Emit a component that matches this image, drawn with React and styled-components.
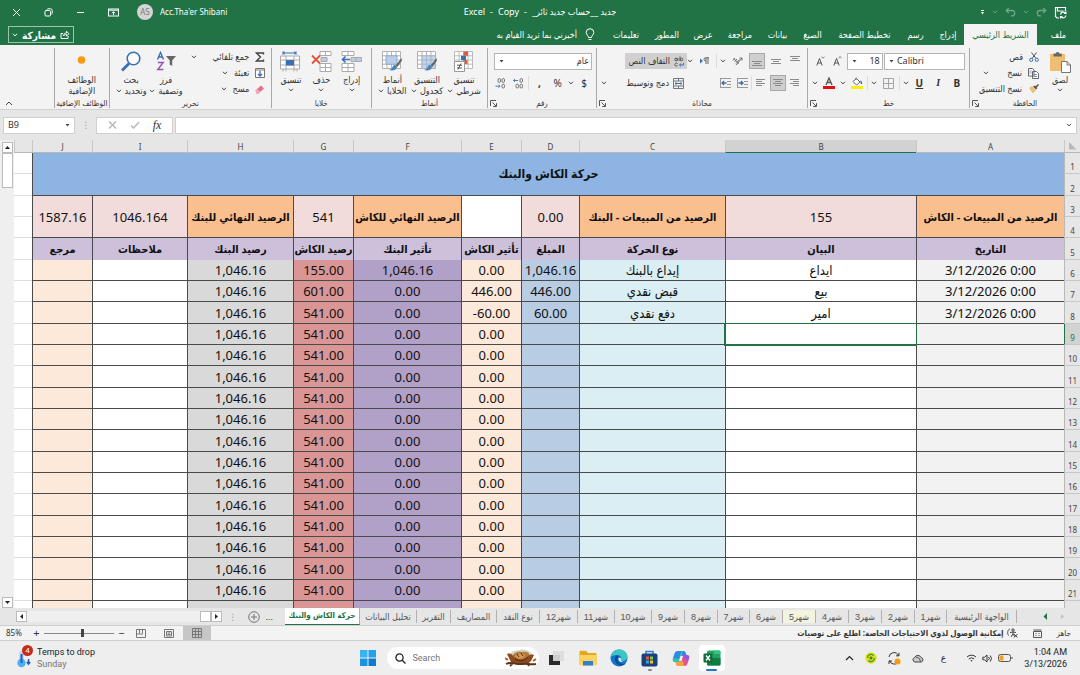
import React from 'react'
import styled, { createGlobalStyle, css } from 'styled-components'

const tabs = [
    { name: 'إدراج', width: 32 },
    { name: 'رسم', width: 33 },
    { name: 'تخطيط الصفحة', width: 69 },
    { name: 'الصيغ', width: 35 },
    { name: 'بيانات', width: 35 },
    { name: 'مراجعة', width: 40 },
    { name: 'عرض', width: 34 },
    { name: 'المطور', width: 38 },
    { name: 'تعليمات', width: 44 },
]

const columns = [
    { id: 'A', width: 148, fill: '#f2f2f2', head: 'التاريخ' },
    { id: 'B', width: 191, fill: '#ffffff', head: 'البيان' },
    { id: 'C', width: 146, fill: '#daeef3', head: 'نوع الحركة' },
    { id: 'D', width: 58, fill: '#b8cce4', head: 'المبلغ' },
    { id: 'E', width: 60, fill: '#fde9d9', head: 'تأثير الكاش' },
    { id: 'F', width: 108, fill: '#b1a0c7', head: 'تأثير البنك' },
    { id: 'G', width: 60, fill: '#da9694', head: 'رصيد الكاش' },
    { id: 'H', width: 106, fill: '#d9d9d9', head: 'رصيد البنك' },
    { id: 'I', width: 95, fill: '#ffffff', head: 'ملاحظات' },
    { id: 'J', width: 60, fill: '#fde9d9', head: 'مرجع' },
]

const summary = [
    { text: 'الرصيد من المبيعات - الكاش', fill: '#fabf8f', bold: true },
    { text: '155', fill: '#f2dcdb' },
    { text: 'الرصيد من المبيعات - البنك', fill: '#fabf8f', bold: true },
    { text: '0.00', fill: '#f2dcdb' },
    { text: '', fill: '#ffffff' },
    { text: 'الرصيد النهائي للكاش', fill: '#fabf8f', bold: true },
    { text: '541', fill: '#f2dcdb' },
    { text: 'الرصيد النهائي للبنك', fill: '#fabf8f', bold: true },
    { text: '1046.164', fill: '#f2dcdb' },
    { text: '1587.16', fill: '#f2dcdb' },
]

const entries = [
    ['3/12/2026 0:00', 'ايداع', 'إيداع بالبنك', '1,046.16', '0.00', '1,046.16', '155.00', '1,046.16', '', ''],
    ['3/12/2026 0:00', 'بيع', 'قبض نقدي', '446.00', '446.00', '0.00', '601.00', '1,046.16', '', ''],
    ['3/12/2026 0:00', 'امير', 'دفع نقدي', '60.00', '-60.00', '0.00', '541.00', '1,046.16', '', ''],
]

const emptyEntry = ['', '', '', '', '0.00', '0.00', '541.00', '1,046.16', '', '']
const rows = [...entries, ...Array(13).fill(emptyEntry)]

const sheets = [
    { name: 'الواجهة الرئيسية', width: 70 },
    { name: 'شهر1', width: 32 },
    { name: 'شهر2', width: 33 },
    { name: 'شهر3', width: 33 },
    { name: 'شهر4', width: 33 },
    { name: 'شهر5', width: 33, marked: true },
    { name: 'شهر6', width: 33 },
    { name: 'شهر7', width: 32 },
    { name: 'شهر8', width: 33 },
    { name: 'شهر9', width: 33 },
    { name: 'شهر10', width: 37 },
    { name: 'شهر11', width: 37 },
    { name: 'شهر12', width: 38 },
    { name: 'نوع النقد', width: 43 },
    { name: 'المصاريف', width: 46 },
    { name: 'التقرير', width: 34 },
    { name: 'تحليل البيانات', width: 57 },
    { name: 'حركة الكاش والبنك', width: 75, active: true },
]

/* ---------- icons ---------- */

function Icon({ w = 12, h = w, color = 'currentColor', line = 1, children }) {
    return (
        <svg width={w} height={h} viewBox={`0 0 ${w} ${h}`} fill="none" stroke={color} strokeWidth={line} aria-hidden="true">
            {children}
        </svg>
    )
}

const Chevron = ({ color = '#444' }) => <Icon w={6} h={4} color={color}><path d="M1 .8 3 2.9 5 .8" /></Icon>
const Triangle = () => <Icon w={5} h={3} color="none"><path d="M.5 0h4L2.5 2.6z" fill="#444" /></Icon>
const Launcher = () => <Icon w={7} h={7} color="#555"><path d="M.5 6V.5H6M2.5 2.5 6 6M6.5 3.2v3.3H3.2" /></Icon>

const CloseIcon = () => <Icon w={9}><path d="m1 1 7 7M8 1 1 8" /></Icon>
const RestoreIcon = () => <Icon w={9}><rect x="1" y="2.5" width="5.5" height="5.5" rx="1" /><path d="M3 1.5C3.2 1 3.5.8 4 .8h2.5c1 0 1.7.7 1.7 1.7V5c0 .6-.2.9-.7 1.1" /></Icon>
const MinimizeIcon = () => <Icon w={9}><path d="M1 4.5h7" /></Icon>
const RibbonOptionsIcon = () => <Icon w={11} h={9}><rect x=".5" y="1" width="10" height="7" /><path d="M.5 2.2h10M5.5 7V3.8M4 5.2l1.5-1.5L7 5.2" /></Icon>
const SaveIcon = () => <Icon w={13} line={1.2}><path d="M11.5 5V1.5h-10v9L3 12h2M3.5 1.5V5h6" /><path d="M6.5 8.5a2.8 2.8 0 0 1 5-1.3M12 5.5v2h-2M12 9.5a2.8 2.8 0 0 1-5 1.2M6.5 12.5v-2h2" /></Icon>
const UndoIcon = () => <Icon w={11} h={10} line={1.3}><path d="M3.8 1 1.2 3.5 3.8 6M1.5 3.5H7a2.7 2.7 0 0 1 0 5.4H6" /></Icon>
const RedoIcon = () => <Icon w={11} h={10} line={1.3}><path d="m7.2 1 2.6 2.5L7.2 6M9.5 3.5H4a2.7 2.7 0 0 0 0 5.4h1" /></Icon>
const BulbIcon = () => <Icon w={10} h={13}><path d="M3.5 9.5C3.5 7.5 1.2 7 1.2 4.5a3.8 3.8 0 0 1 7.6 0C8.8 7 6.5 7.5 6.5 9.5zM3.5 11.5h3" /></Icon>
const ShareIcon = () => <Icon w={10} h={9}><path d="M3 3.5H1v5h7V6M3.5 6C3.7 4 4.5 3 6.5 3V1.2L9 3.8 6.5 6V4.5C5 4.5 4.2 5 3.5 6z" /></Icon>

const PasteIcon = () => (
    <Icon w={22} h={22} color="none">
        <rect x="1" y="3" width="15" height="17" fill="#eebf72" />
        <path d="M4.5 5.5v-3h2.300a1.800 1.800 0 0 1 3.500 0h2.400v3z" fill="#666" />
        <path d="M12.5 10.5H18l3.5 3.5v7.5h-9z" fill="#fff" stroke="#777" />
        <path d="M18 10.5V14h3.5" stroke="#777" />
    </Icon>
)
const CutIcon = () => (
    <Icon w={10} h={10} color="#555">
        <path d="m2.5.5 4.5 6M7.5.5l-4.5 6" />
        <circle cx="2.2" cy="7.8" r="1.6" stroke="#3b6fb5" /><circle cx="7.8" cy="7.8" r="1.6" stroke="#3b6fb5" />
    </Icon>
)
const CopyIcon = () => <Icon w={11} h={11} color="#666"><path d="M.5.5h4L6 2v6H.5zM4.5 3.5h4l2 2v5h-6z" fill="#fff" /><path d="M1.5 3h2M1.5 5h2M6 6.5h3M6 8.5h3" stroke="#6a93c8" /></Icon>
const PainterIcon = () => <Icon w={11} h={10} color="none"><path d="m1 4 3-2 4 4-3 3.5z" fill="#eebf72" /><path d="m5 2.5 2-1L9.5 4 8 5.5z" fill="#555" /><path d="m8 3 2.5-2.5" stroke="#555" strokeWidth="1.5" /></Icon>

const BordersIcon = () => <Icon w={11} color="#a5a5a5"><path d="M.5.5h10v10H.5zM5.5.5v10M.5 5.5h10" /></Icon>
const FillIcon = () => <Icon w={12} h={12} color="#666"><path d="m2 4.5 3.5-3L9 5 5.500 8zM5 3V.8" fill="#fff" /><path d="M9.5 4c1 1 1.3 2 .8 3" stroke="#3b6fb5" strokeWidth="1.5" /><path d="M0 10.5h12" stroke="#f8f000" strokeWidth="3" /></Icon>
const FontColorIcon = () => <Icon w={12} h={12} color="#555"><path d="m3 8 3-7 3 7M4 5.5h4" strokeWidth="1.3" /><path d="M0 10.5h12" stroke="#e01010" strokeWidth="3" /></Icon>
const FontSizeIcon = ({ up }) => <Icon w={9} h={10} color="#555"><path d="m.8 9.5 2.7-7 2.7 7M1.8 7h3.5" /><path d={up ? 'M5.5 2 7 .6 8.5 2' : 'M5.5.8 7 2.2 8.5.8'} strokeWidth=".8" /></Icon>

const lineSets = {
    top: 'M0 .5h10M2 2.5h6M0 4.5h10',
    middle: 'M0 3.5h10M2 5.5h6M0 7.5h10',
    bottom: 'M0 5.5h10M2 7.5h6M0 9.5h10',
    right: 'M0 1.5h9M3 3.5h6M0 5.5h9M3 7.5h6',
    center: 'M0 1.5h10M2 3.5h6M0 5.5h10M2 7.5h6',
    left: 'M0 1.5h9M0 3.5h6M0 5.5h9M0 7.5h6',
}
const LinesIcon = ({ kind }) => <Icon w={10} h={10} color="#8a8a8a"><path d={lineSets[kind]} /></Icon>
const OrientationIcon = () => <Icon w={11} h={10} color="#666"><path d="M1 4.5 3 2M2.5 6 5 3M4 7.5l3.5-4M1.5 2.5l5.5 5M4 9.2 10 2M7.5 2H10v2.5" strokeWidth=".9" /></Icon>
const DirectionIcon = () => <Icon w={10} h={8} color="#666"><path d="M7 7V.8M9 7V.8M10 .8H6.5a1.4 1.4 0 0 0 0 3H7" /><path d="M1 1.5v5L4 4z" fill="#3b6fb5" stroke="none" /></Icon>
const IndentIcon = ({ flip }) => (
    <Icon w={11} h={10} color="#999">
        <path d="M0 .5h11M7 3.5h4M7 6.5h4M0 9.5h11M.5.5v9" />
        <path d={flip ? 'M6.5 5H2M4 3 2 5l2 2' : 'M1.5 5H6M4 3l2 2-2 2'} stroke="#3b6fb5" strokeWidth="1.3" />
    </Icon>
)
const WrapIcon = () => (
    <Icon w={10} h={11} color="#555">
        <circle cx="2" cy="3.5" r="1.3" /><path d="M3.8 2v3M6 .5V5" /><circle cx="7.5" cy="3.5" r="1.3" />
        <path d="M3.5 7.5C2.5 6.8.8 7.3.8 8.6s1.7 1.8 2.7 1.1" /><path d="M9.5 7v2h-4M7 7.6 5.5 9 7 10.4" stroke="#3b6fb5" />
    </Icon>
)
const MergeIcon = () => <Icon w={11} h={11} color="#777"><path d="M.5.5h10v10H.5zM.5 3h10M.5 8h10M5.5.5V3M5.5 8v2.5" /><path d="M2 5.5h7M3.5 4.2 2 5.5l1.5 1.3M7.5 4.2 9 5.5 7.5 6.8" stroke="#3b6fb5" /></Icon>
const DecimalIcon = ({ more }) => (
    <Icon w={11} h={11} color="#666" line={0.9}>
        <rect x="7" y=".6" width="2.5" height="3.8" rx="1.2" />
        {!more && <rect x="3" y=".6" width="2.5" height="3.8" rx="1.2" />}
        <rect x="7" y="6.2" width="2.5" height="3.8" rx="1.2" />
        {more && <rect x="3" y="6.2" width="2.5" height="3.8" rx="1.2" />}
        <path d={more ? 'M5 2.5H.5M2 1 .5 2.5 2 4' : 'M.5 8.2H5M3.5 6.7 5 8.2 3.5 9.7'} stroke="#3b6fb5" />
    </Icon>
)

const gridPath = 'M1.5.5h18v17h-18zM1.5 4.8h18M1.5 9h18M1.5 13.2h18M6 .5v17M10.5.5v17M15 .5v17'
const Brush = () => (
    <>
        <path d="m20.5 7-6 7.5 1.800 1.500L21 9.500z" fill="#666" stroke="none" />
        <path d="M14 14c-2 0-2.200 1.500-3 3-.5 1-1.500 1.500-3 2 3 1 7.500.5 8-3z" fill="#4a80bd" stroke="none" />
    </>
)
const ConditionalIcon = () => (
    <Icon w={22} h={21} color="#bbb">
        <path d={gridPath} fill="#fff" />
        <path d="M10.5.5H15v4.300h-4.500zM10.500 9h4v4h-4z" fill="#dd5b45" stroke="none" /><path d="M8 4.800h5V9H8z" fill="#3b6fb5" stroke="none" />
        <path d="M1.5 10.5h10v10h-10z" fill="#fff" stroke="#999" /><path d="M4 14.2h5M4 17h5M8 12.5l-3 6" stroke="#555" />
    </Icon>
)
const TableStyleIcon = () => <Icon w={22} h={21} color="#b0b0b0"><path d={gridPath} fill="#fff" /><path d="M6 4.800h13.500v12.700H6z" fill="#b4cee9" opacity=".8" /><path d="M10.5 5v12M15 5v12M6 9h13M6 13.2h13" stroke="#a5b9cf" /><Brush /></Icon>
const CellStyleIcon = () => <Icon w={22} h={21} color="#b0b0b0"><path d={gridPath} fill="#fff" /><path d="M5 4.800h11v8.400H5z" fill="#b9cde8" stroke="#8fabd0" /><Brush /></Icon>
const InsertCellsIcon = () => <Icon w={21} h={21} color="#aaa"><path d="M1 .5h12v4H1zM7 .5v4M1 12.5h12v8H1zM7 12.5v8M1 16.5h12" fill="#fff" /><path d="M10 6.5h10.5v4H10zM15 6.5v4" fill="#b9cde8" /><path d="M9 8.5H1.5M4.5 5.5l-3 3 3 3" stroke="#3b6fb5" strokeWidth="1.6" /></Icon>
const DeleteCellsIcon = () => <Icon w={21} h={21} color="#aaa"><path d="M9 .5h11v4H9zM14.5.5v4M9 12.5h11v8H9zM14.5 12.5v8M9 16.5h11" fill="#fff" /><path d="M10 6.5h6v4h-6z" fill="#b9cde8" /><path d="m1 4.5 8 8M9 4.5l-8 8" stroke="#e0533a" strokeWidth="1.8" /></Icon>
const FormatCellsIcon = () => <Icon w={21} h={21} color="#aaa"><path d="M.5 5h19v13H.5zM.5 9h19M.5 14h19M6 5v15.5M14 5v15.5M3 18v2.5M17 18v2.5" fill="#fff" /><path d="M6 9h8v5.5H6z" fill="#3b6fb5" stroke="none" /><path d="M3 2h13M3 .2v3.6M16 .2v3.6M5 .8 3.5 2 5 3.2M14 .8 15.5 2 14 3.2" stroke="#3b6fb5" /></Icon>
const SumIcon = () => <Icon w={10} h={10} color="#444" line={1.4}><path d="M8.5 2.5V1h-7l4 4-4 4h7V7.5" /></Icon>
const FillDownIcon = () => <Icon w={10} h={10} color="#777"><path d="M.5.5h9v9h-9zM.5 2h9" fill="#fff" /><path d="M5 3v5M3 6l2 2 2-2" stroke="#3b6fb5" strokeWidth="1.3" /></Icon>
const EraserIcon = () => <Icon w={10} h={9} color="none"><path d="M.5 5.5 6 .5l3 3-5.5 5h-2z" fill="#e8708c" /><path d="m.5 5.5 1.8-1.6 3 3-1.8 1.6h-2z" fill="#f3a7b8" /></Icon>
const SortIcon = () => <Icon w={20} h={20} color="#3b6fb5" line={1.4}><path d="m1.5 8.5 3-7 3 7M2.5 6h4" /><path d="M1.8 11.5h5.4l-5.4 7h5.6" stroke="#9b4fb5" /><path d="M10 5h10l-3.8 4.5V15l-2.5-1.5v-4z" fill="#666" stroke="none" /></Icon>
const FindIcon = () => <Icon w={22} h={21} color="#3b6fb5"><circle cx="13.5" cy="7.5" r="6.3" strokeWidth="1.6" fill="#fdfdfd" /><path d="m9 12.5-7 7" strokeWidth="2.8" /></Icon>
const AddinIcon = () => <Icon w={21} h={21} color="none"><circle cx="10.5" cy="9" r="3.8" fill="#f59a12" /></Icon>

const CheckIcon = () => <Icon w={10} h={8} color="#b5b5b5" line={1.3}><path d="M1 4.5 3.5 7 9 1" /></Icon>
const CrossIcon = () => <Icon w={9} h={8} color="#b5b5b5" line={1.3}><path d="m1 .5 7 7M8 .5l-7 7" /></Icon>
const ArrowHead = ({ d, fill = '#222' }) => <Icon w={7} h={7} color="none"><path d={d} fill={fill} /></Icon>
const AddSheetIcon = () => <Icon w={12} color="#777"><circle cx="6" cy="6" r="5.3" /><path d="M6 3v6M3 6h6" /></Icon>
const CornerIcon = () => <Icon w={8} h={8} color="none"><path d="M0 0v7.5h7.5z" fill="#b8b8b8" /></Icon>

const NormalViewIcon = () => <Icon w={10} h={10} color="#777"><path d="M.5.5h9v9h-9zM3.5.5v9M6.5.5v9M.5 3.5h9M.5 6.5h9" /></Icon>
const PageViewIcon = () => <Icon w={10} h={9} color="#777"><path d="M.5.5h9v8h-9zM2.5 2.5h5V7h-5zM3.5 4h3M3.5 5.5h3" /></Icon>
const BreakViewIcon = () => <Icon w={10} h={9} color="#777"><path d="M.5.5h9v8h-9zM3.5.5v4M6.5.5v4M.5 5H7" /></Icon>
const MacroIcon = () => <Icon w={9} h={9} color="#555"><path d="M.5 2.5h8v6h-8zM.5 1h8M2.5 4.5h1M5.5 4.5h1M2.5 6.5h1M5.5 6.5h1" /></Icon>
const AccessIcon = () => <Icon w={11} h={10} color="#444"><circle cx="6" cy="2" r="1.2" /><path d="M3 4.5 6 4l3 .5M6 4v2l2 3M6 6 4 9M1.5 7.5C0 5 .5 2 3 .8M7 6l3.5 3.5M10.5 6 7 9.5" /></Icon>

const WeatherIcon = () => (
    <Icon w={19} h={19} color="none">
        <rect x="4" y="2" width="5" height="12" rx="2.5" fill="#bcdcf6" /><circle cx="6.5" cy="14" r="4.2" fill="#4cb1f2" />
        <path d="M6.5 5v9" stroke="#1f5fc0" strokeWidth="2" />
        <path d="M13.5 10v5M11.8 13l1.7 2 1.7-2" stroke="#2457b8" strokeWidth="1.5" />
    </Icon>
)
const WindowsIcon = () => <Icon w={16} color="none"><path d="M0 0h7.5v7.5H0z" fill="#38b5f1" /><path d="M8.5 0H16v7.5H8.500z" fill="#22a2ea" /><path d="M0 8.500h7.500V16H0z" fill="#1b93e2" /><path d="M8.500 8.500H16V16H8.500z" fill="#0c7dd6" /></Icon>
const SearchIcon = () => <Icon w={11} color="#222" line={1.3}><circle cx="4.5" cy="4.5" r="3.6" /><path d="m7.2 7.2 3.3 3.3" /></Icon>
const ArtIcon = () => (
    <Icon w={32} h={18} color="none">
        <path d="M4 8C5 3 9 1 13 1.5 19-1 27 2 28 8l-4 4H8z" fill="#ccd3c4" />
        <path d="M7 8c1-4 6-6 10-5 5-1 8 1 8 5l-4 5H10z" fill="#b5793f" />
        <path d="M2 5c3-1 5 0 6 2 3 4 10 5 14 1 2-2 4-3 7-2l-3 6c-4 5-16 5-20 1z" fill="#8c4a20" />
        <path d="M10 7c3-3 7-4 10-1-2 4-6 5-10 1z" fill="#d9994f" />
        <path d="M1 15c6-3 9 1 15 0s9 1 15 0M5 17l3-3M24 17l-2-3" stroke="#5d3218" strokeWidth="1.8" />
        <path d="M10 10c5 3 9 2 13-2M12 5l2 3M16 4l2 3" stroke="#4c260f" />
        <path d="M3 11 0 9M28 12l3-2" stroke="#a3662f" strokeWidth="2" />
    </Icon>
)
const TaskViewIcon = () => <Icon w={17} h={16} color="none"><path d="M1 5h11v10H1z" fill="#2b2b2b" /><path d="M5 1h11v10H5z" fill="#dcdcdc" opacity=".92" /></Icon>
const FolderIcon = () => <Icon w={18} h={16} color="none"><path d="M.5 2c0-.8.5-1.3 1.3-1.3h5L9 3h7.500c.6 0 1 .5 1 1v10.500H.5z" fill="#e5a823" /><path d="M.5 5h17v9.500c0 .6-.4 1-1 1h-15c-.6 0-1-.4-1-1z" fill="#ffd45e" /><path d="M4 11h10v4.500H4z" fill="#2d7fcf" /></Icon>
const EdgeIcon = () => (
    <Icon w={18} h={18} color="none">
        <circle cx="9" cy="9" r="8.5" fill="#1474c9" />
        <path d="M.6 8C1.5 3.5 5 .5 9.2.5c4.8 0 8.300 3.500 8.300 7 0 2.700-2.100 4.500-4.700 4.500-2 0-2.800-.8-2-1.700.8-1.200.4-3.800-2.600-4.300C5 5.500 1.800 6.700.6 8z" fill="#3cc5c4" />
        <path d="M6.5 6.5C4 8.5 4.500 13 7.500 15.500c2.500 2 6.500 1 8.500-1.300-3 1.500-6.500.8-8-2-.8-1.700-.5-3.700.8-5z" fill="#0b4d94" />
        <path d="M8.500 9c-.5 3 2 4.500 5 3.700-2-.1-3.200-.9-2.600-2.400.5-1-.8-2.300-2.400-1.300z" fill="#eef8fd" />
    </Icon>
)
const StoreIcon = () => <Icon w={17} h={17} color="none"><path d="M5 4V1.500h7V4" stroke="#2c7fd0" strokeWidth="1.5" /><rect x=".5" y="3.5" width="16" height="13" rx="2" fill="#17427c" /><path d="M5 6.500h3v3H5z" fill="#f0553a" /><path d="M9 6.500h3v3H9z" fill="#8cc63f" /><path d="M5 10.500h3v3H5z" fill="#35a5ea" /><path d="M9 10.500h3v3H9z" fill="#fbc12d" /></Icon>
const CopilotIcon = () => (
    <Icon w={18} h={17} color="none">
        <path d="M6 1h5.500c1.500 0 2 1 2.400 2.300L15 7h-4L8 12H3.500C1 12 .3 10.500 1 8l1.500-4.500C3 1.800 4 1 6 1z" fill="#2b8be8" />
        <path d="M1 8c-.7 2.500 0 4 2.500 4H8l1.500-5L11 1c-3 1-3 5-4 8z" fill="#35c3a0" />
        <path d="M12 16H6.500c-1.500 0-2-1-2.400-2.300L3.500 12H8l2.500-7h4c2.500 0 3.200 1.500 2.500 4l-1.500 4.500C15 15.200 14 16 12 16z" fill="#e6518f" />
        <path d="M12 16H6.500c-1.500 0-2-1-2.400-2.300L3.500 12H8l3-1z" fill="#f8a53a" />
        <path d="M10.500 5h4c2.500 0 3.200 1.500 2.500 4l-3 1z" fill="#8b5be8" />
        <path d="m8.500 6-1.500 5h2.500L11 6z" fill="#f4f2fb" />
    </Icon>
)
const ExcelIcon = () => <Icon w={18} h={16} color="none"><rect x="4" y=".5" width="13.5" height="15" rx="1.5" fill="#21a366" /><path d="M4 8h13.500v6c0 1-.5 1.500-1.500 1.500H5.500C4.500 15.500 4 15 4 14z" fill="#107c41" /><path d="M11 .5h5c1 0 1.500.5 1.500 1.500v2H11z" fill="#33c481" /><rect x=".5" y="3.5" width="9" height="9" rx="1" fill="#0f6b38" /><path d="m3 5.500 4 5M7 5.500l-4 5" stroke="#fff" strokeWidth="1.4" /></Icon>

const TrayUpIcon = () => <Icon w={9} h={6} color="#222" line={1.2}><path d="M1 5 4.5 1.5 8 5" /></Icon>
const TrayPlusIcon = () => <Icon w={12} color="none"><circle cx="6" cy="6" r="5.7" fill="#e9dc16" /><path d="M2.5 6a3.5 3.5 0 0 1 6-2.500M9.500 6a3.500 3.500 0 0 1-6 2.500" stroke="#2f9e3c" strokeWidth="1.3" /><path d="M6 4.500v3M4.500 6h3" stroke="#1f7c30" strokeWidth="1.3" /></Icon>
const SyncIcon = () => <Icon w={13} h={13} color="#333"><path d="M1 5a5 5 0 0 1 9.5-1.500M11 .8v3H8M10 10.500A5 5 0 0 1 1.500 8.500M1 12V9h3" /><circle cx="9.5" cy="9.5" r="3" fill="#f59a12" stroke="none" /></Icon>
const CloudIcon = () => <Icon w={12} h={9} color="#444"><path d="M3 8a2.300 2.300 0 0 1-.3-4.500A3.400 3.400 0 0 1 9 3.500 2.300 2.300 0 0 1 9.200 8z" fill="#ccc" /><path d="M4 3.500c2-.5 3.500.5 4.500 4" /></Icon>
const WifiIcon = () => <Icon w={11} h={8} color="#333"><path d="M1 3a6.500 6.500 0 0 1 9 0M2.800 5a4 4 0 0 1 5.400 0" /><circle cx="5.5" cy="6.7" r=".8" fill="#333" stroke="none" /></Icon>
const VolumeIcon = () => <Icon w={11} h={9} color="#333"><path d="M.8 3.200v2.600h1.800L5 8V1L2.600 3.200zM6.500 3a2 2 0 0 1 0 3M8.200 1.500a4.500 4.500 0 0 1 0 6" /></Icon>
const BatteryIcon = () => <Icon w={15} h={8} color="#555"><rect x=".5" y=".5" width="12" height="7" rx="2" /><path d="M14 3v2" /><rect x="1.5" y="1.5" width="4" height="5" rx="1" fill="#f0a020" stroke="none" /></Icon>

/* ---------- ribbon pieces ---------- */

function BigButton({ icon, lines, caret }) {
    return (
        <Big type="button">
            <BigArt>{icon}</BigArt>
            <span>{lines[0]}</span>
            {lines[1] && <span>{lines[1]} {caret && <Chevron />}</span>}
            {!lines[1] && caret && <Below><Chevron /></Below>}
        </Big>
    )
}

function Group({ size, name, launcher, children }) {
    return (
        <GroupBox $size={size}>
            <GroupBody>{children}</GroupBody>
            <GroupName>
                <span>{name}</span>
                {launcher && <LauncherButton type="button" aria-label={`خيارات ${name}`}><Launcher /></LauncherButton>}
            </GroupName>
        </GroupBox>
    )
}

function Picker({ label, value, size, align = 'right', options }) {
    return (
        <PickerBox $size={size}>
            <PickerSelect $align={align} aria-label={label} defaultValue={value}>
                {options.map(o => <option key={o}>{o}</option>)}
            </PickerSelect>
            <Triangle />
        </PickerBox>
    )
}

function Ribbon() {
    return (
        <RibbonBar>
            <Group size={111} name="الحافظة" launcher>
                <BigButton icon={<PasteIcon />} lines={['لصق']} caret />
                <Stack>
                    <Small type="button"><CutIcon />قص</Small>
                    <Small type="button"><CopyIcon />نسخ <Push $gap={6} /><Chevron /></Small>
                    <Small type="button"><PainterIcon />نسخ التنسيق</Small>
                </Stack>
            </Group>
            <Group size={162} name="خط" launcher>
                <Block>
                    <ToolRow>
                        <Picker label="الخط" value="Calibri" size={81} align="left" options={['Calibri', 'Arial']} />
                        <Picker label="حجم الخط" value="18" size={36} options={['18', '20']} />
                        <Tool type="button" aria-label="تكبير الخط"><FontSizeIcon up /></Tool>
                        <Tool type="button" aria-label="تصغير الخط"><FontSizeIcon /></Tool>
                    </ToolRow>
                    <ToolRow>
                        <Tool type="button"><b>B</b></Tool>
                        <Tool type="button"><Italic>I</Italic></Tool>
                        <Tool type="button"><u><b>U</b></u></Tool>
                        <Chevron />
                        <Rule />
                        <Tool type="button" aria-label="حدود"><BordersIcon /></Tool>
                        <Chevron />
                        <Rule />
                        <Tool type="button" aria-label="لون التعبئة"><FillIcon /></Tool>
                        <Chevron />
                        <Tool type="button" aria-label="لون الخط"><FontColorIcon /></Tool>
                        <Chevron />
                    </ToolRow>
                </Block>
            </Group>
            <Group size={212} name="محاذاة" launcher>
                <Block>
                    <ToolRow>
                        <Tool type="button" aria-label="محاذاة للأعلى"><LinesIcon kind="top" /></Tool>
                        <Tool type="button" aria-label="محاذاة للوسط"><LinesIcon kind="middle" /></Tool>
                        <Tool type="button" aria-label="محاذاة للأسفل" $on><LinesIcon kind="bottom" /></Tool>
                        <Tool type="button" aria-label="الاتجاه"><OrientationIcon /></Tool>
                        <Chevron />
                        <Rule />
                        <Tool type="button" aria-label="اتجاه النص"><DirectionIcon /></Tool>
                        <Chevron />
                    </ToolRow>
                    <ToolRow $start>
                        <Tool type="button" aria-label="يمين"><LinesIcon kind="right" /></Tool>
                        <Tool type="button" aria-label="توسيط" $on><LinesIcon kind="center" /></Tool>
                        <Tool type="button" aria-label="يسار"><LinesIcon kind="left" /></Tool>
                        <Rule />
                        <Tool type="button" aria-label="إنقاص المسافة"><IndentIcon /></Tool>
                        <Tool type="button" aria-label="زيادة المسافة"><IndentIcon flip /></Tool>
                    </ToolRow>
                </Block>
                <Block $fit={86}>
                    <ToolRow $start>
                        <WideTool type="button" $on><WrapIcon />التفاف النص</WideTool>
                    </ToolRow>
                    <ToolRow>
                        <WideTool type="button"><MergeIcon />دمج وتوسيط</WideTool>
                        <Chevron />
                    </ToolRow>
                </Block>
            </Group>
            <Group size={109} name="رقم" launcher>
                <Block>
                    <ToolRow>
                        <Picker label="تنسيق الأرقام" value="عام" size={98} options={['عام', 'رقم']} />
                    </ToolRow>
                    <ToolRow>
                        <Tool type="button">$</Tool>
                        <Chevron />
                        <Tool type="button">%</Tool>
                        <Tool type="button"><b>,</b></Tool>
                        <Rule />
                        <Tool type="button" aria-label="زيادة المنازل العشرية"><DecimalIcon more /></Tool>
                        <Tool type="button" aria-label="إنقاص المنازل العشرية"><DecimalIcon /></Tool>
                    </ToolRow>
                </Block>
            </Group>
            <Group size={116} name="أنماط">
                <BigButton icon={<ConditionalIcon />} lines={['تنسيق', 'شرطي']} caret />
                <BigButton icon={<TableStyleIcon />} lines={['التنسيق', 'كجدول']} caret />
                <BigButton icon={<CellStyleIcon />} lines={['أنماط', 'الخلايا']} caret />
            </Group>
            <Group size={100} name="خلايا">
                <BigButton icon={<InsertCellsIcon />} lines={['إدراج']} caret />
                <BigButton icon={<DeleteCellsIcon />} lines={['حذف']} caret />
                <BigButton icon={<FormatCellsIcon />} lines={['تنسيق']} caret />
            </Group>
            <Group size={162} name="تحرير">
                <Stack $wide>
                    <Small type="button"><SumIcon />جمع تلقائي <Push $gap={4} /><Chevron /></Small>
                    <Small type="button"><FillDownIcon />تعبئة <Chevron /></Small>
                    <Small type="button"><EraserIcon />مسح <Chevron /></Small>
                </Stack>
                <BigButton icon={<SortIcon />} lines={['فرز', 'وتصفية']} caret />
                <BigButton icon={<FindIcon />} lines={['بحث', 'وتحديد']} caret />
            </Group>
            <Group size={55} name="الوظائف الإضافية">
                <BigButton icon={<AddinIcon />} lines={['الوظائف', 'الإضافية']} />
            </Group>
            <RibbonEnd>
                <Collapse type="button" aria-label="طي الشريط"><Icon w={8} h={5} color="#444"><path d="m1 4 3-3 3 3" /></Icon></Collapse>
            </RibbonEnd>
        </RibbonBar>
    )
}

function Sheet() {
    return (
        <SheetArea>
            <Table>
                <colgroup>
                    <col style={{ width: 16 }} />
                    {columns.map(c => <col key={c.id} style={{ width: c.width }} />)}
                    <col style={{ width: 18 }} />
                </colgroup>
                <thead>
                    <tr>
                        <ColHead><CornerIcon /></ColHead>
                        {columns.map(c => <ColHead key={c.id} scope="col" $on={c.id === 'B'}>{c.id}</ColHead>)}
                        <ColHead />
                    </tr>
                </thead>
                <tbody>
                    <Row>
                        <RowHead scope="row">1</RowHead>
                        <TitleCell colSpan={10} rowSpan={2} $fill="#8db4e2" $bold>حركة الكاش والبنك</TitleCell>
                        <Blank />
                    </Row>
                    <Row><RowHead scope="row">2</RowHead><Blank /></Row>
                    <Row>
                        <RowHead scope="row">3</RowHead>
                        {summary.map((s, i) => <Cell key={i} rowSpan={2} $fill={s.fill} $bold={s.bold}>{s.text}</Cell>)}
                        <Blank />
                    </Row>
                    <Row><RowHead scope="row">4</RowHead><Blank /></Row>
                    <Row>
                        <RowHead scope="row">5</RowHead>
                        {columns.map(c => <HeadCell key={c.id} $fill="#ccc0da" $bold>{c.head}</HeadCell>)}
                        <Blank />
                    </Row>
                    {rows.map((row, r) => (
                        <Row key={r}>
                            <RowHead scope="row" $on={r === 3}>{r + 6}</RowHead>
                            {row.map((text, i) => (
                                <Cell key={i} $fill={columns[i].fill} $active={r === 3 && i === 1}><bdi>{text}</bdi></Cell>
                            ))}
                            <Blank />
                        </Row>
                    ))}
                    <Row>
                        <RowHead />
                        {columns.map(c => <Cell key={c.id} $fill={c.fill} />)}
                        <Blank />
                    </Row>
                </tbody>
            </Table>
            <VScroll>
                <ScrollButton type="button" aria-label="للأعلى"><ArrowHead d="M1 5h5L3.5 2z" /></ScrollButton>
                <VThumb />
                <ScrollButton type="button" aria-label="للأسفل"><ArrowHead d="M1 2h5L3.5 5z" /></ScrollButton>
            </VScroll>
        </SheetArea>
    )
}

function Taskbar() {
    return (
        <TaskRow>
            <Weather>
                <WeatherArt><WeatherIcon /><Badge>4</Badge></WeatherArt>
                <div>
                    <p>Temps to drop</p>
                    <Muted>Sunday</Muted>
                </div>
            </Weather>
            <Dock>
                <Plain type="button" aria-label="Start"><WindowsIcon /></Plain>
                <SearchBox>
                    <SearchIcon />
                    <input type="text" aria-label="Search" placeholder="Search" />
                    <ArtIcon />
                </SearchBox>
                <DockItem type="button" aria-label="Task View"><TaskViewIcon /></DockItem>
                <DockItem type="button" aria-label="File Explorer"><FolderIcon /></DockItem>
                <DockItem type="button" aria-label="Edge"><EdgeIcon /></DockItem>
                <DockItem type="button" aria-label="Store" $mark="#888"><StoreIcon /></DockItem>
                <DockItem type="button" aria-label="Copilot"><CopilotIcon /></DockItem>
                <DockItem type="button" aria-label="Excel" $mark="#2277c4" $on><ExcelIcon /></DockItem>
            </Dock>
            <Tray>
                <TrayUpIcon />
                <TrayPlusIcon />
                <SyncIcon />
                <CloudIcon />
                <Lang>ع</Lang>
                <Status><WifiIcon /><VolumeIcon /><BatteryIcon /></Status>
                <Clock>
                    <p>1:04 AM</p>
                    <p>3/13/2026</p>
                </Clock>
            </Tray>
        </TaskRow>
    )
}

function App() {
    return (
        <Window dir="rtl">
            <GlobalStyle />
            <Header>
                <TitleBar>
                    <QuickAccess>
                        <Plain type="button" aria-label="حفظ"><SaveIcon /></Plain>
                        <Dim type="button" aria-label="إعادة"><RedoIcon /></Dim>
                        <Dim type="button" aria-label="خيارات الإعادة"><Chevron color="white" /></Dim>
                        <Dim type="button" aria-label="تراجع"><UndoIcon /></Dim>
                        <Dim type="button" aria-label="خيارات التراجع"><Chevron color="white" /></Dim>
                        <Plain type="button" aria-label="تخصيص"><Icon w={5} h={5} color="none"><path d="M1 0h3v1H1zM1 2h3L2.5 4.5z" fill="#fff" /></Icon></Plain>
                    </QuickAccess>
                    <DocTitle>
                        <bdi>جديد __حساب جديد ثائر_</bdi><span>-</span><bdi>Copy</bdi><span>-</span><bdi>Excel</bdi>
                    </DocTitle>
                    <WindowTools>
                        <Plain type="button" aria-label="إغلاق"><CloseIcon /></Plain>
                        <Plain type="button" aria-label="استعادة"><RestoreIcon /></Plain>
                        <Plain type="button" aria-label="تصغير"><MinimizeIcon /></Plain>
                        <Plain type="button" aria-label="خيارات عرض الشريط"><RibbonOptionsIcon /></Plain>
                        <User><Avatar>AS</Avatar>Acc.Tha'er Shibani</User>
                    </WindowTools>
                </TitleBar>
                <TabBar>
                    <Tab type="button" $width={43}>ملف</Tab>
                    <Tab type="button" $width={73} $on>الشريط الرئيسي</Tab>
                    {tabs.map(t => <Tab key={t.name} type="button" $width={t.width}>{t.name}</Tab>)}
                    <TellMe type="button"><BulbIcon />أخبرني بما تريد القيام به</TellMe>
                    <Share type="button"><ShareIcon />مشاركة<Chevron color="white" /></Share>
                </TabBar>
            </Header>
            <Ribbon />
            <FormulaBar>
                <NameBox>
                    <input type="text" aria-label="مربع الاسم" defaultValue="B9" />
                    <Triangle />
                </NameBox>
                <Dots>⋮</Dots>
                <FormulaTools>
                    <Plain type="button" aria-label="إلغاء"><CrossIcon /></Plain>
                    <Plain type="button" aria-label="إدخال"><CheckIcon /></Plain>
                    <Fx type="button">fx</Fx>
                </FormulaTools>
                <FormulaField>
                    <input type="text" aria-label="شريط الصيغة" />
                    <Chevron />
                </FormulaField>
            </FormulaBar>
            <Sheet />
            <SheetBar>
                <SheetNav>
                    <ArrowHead d="M2 1v5l3-2.5z" fill="#c4c4c4" />
                    <ArrowHead d="M5 0v7L1.5 3.5z" fill="#217346" />
                </SheetNav>
                {sheets.map(s => (
                    <SheetTab key={s.name} type="button" $width={s.width} $on={s.active} $marked={s.marked}>{s.name}</SheetTab>
                ))}
                <SheetMore>
                    <span>...</span>
                    <Plain type="button" aria-label="ورقة جديدة"><AddSheetIcon /></Plain>
                    <Dots>⋮</Dots>
                </SheetMore>
                <HScroll>
                    <ScrollButton type="button" aria-label="يمين"><ArrowHead d="M2 1v5l3-2.5z" /></ScrollButton>
                    <HThumb />
                    <ScrollButton type="button" aria-label="يسار"><ArrowHead d="M5 1v5L2 3.5z" /></ScrollButton>
                </HScroll>
            </SheetBar>
            <StatusBar>
                <StatusInfo>
                    <span>جاهز</span>
                    <MacroIcon />
                    <Access><AccessIcon /><b>إمكانية الوصول لذوي الاحتياجات الخاصة: اطلع على توصيات</b></Access>
                </StatusInfo>
                <ViewTools>
                    <ViewButton type="button" aria-label="عادي" $on><NormalViewIcon /></ViewButton>
                    <ViewButton type="button" aria-label="تخطيط الصفحة"><PageViewIcon /></ViewButton>
                    <ViewButton type="button" aria-label="فواصل الصفحات"><BreakViewIcon /></ViewButton>
                </ViewTools>
                <Zoom>
                    <Plain type="button">−</Plain>
                    <Slider type="range" aria-label="تكبير" min="0" max="100" defaultValue="44" />
                    <Plain type="button">+</Plain>
                    <Percent>85%</Percent>
                </Zoom>
            </StatusBar>
            <Taskbar />
        </Window>
    )
}

export default App

const GlobalStyle = createGlobalStyle`
    * {
        box-sizing: border-box;
    }
    body {
        margin: 0;
    }
    p {
        margin: 0;
    }
    svg {
        flex: none;
    }
    button, input, select {
        font: inherit;
        color: inherit;
        margin: 0;
        padding: 0;
        border: 0;
        background: none;
        outline: none;
    }
`

const uiFont = '"Noto Sans", "DejaVu Sans Condensed", "DejaVu Sans", sans-serif'

const Window = styled.div`
    display: flex;
    flex-direction: column;
    height: 100vh;
    overflow: hidden;
    background: #e6e6e6;
    color: #333;
    font-family: ${uiFont};
    font-size: 9px;
    line-height: 12px;
    white-space: nowrap;
`

const Plain = styled.button`
    display: flex;
    align-items: center;
    justify-content: center;
`

const Dim = styled(Plain)`
    opacity: 0.35;
`

const Header = styled.header`
    background: #217346;
    color: white;
`

const TitleBar = styled.div`
    display: grid;
    grid-template-columns: 1fr auto 1fr;
    align-items: center;
    height: 24px;
`

const QuickAccess = styled.div`
    display: flex;
    align-items: center;
    gap: 7px;
    padding-right: 13px;
`

const DocTitle = styled.div`
    display: flex;
    gap: 5px;
`

const WindowTools = styled.div`
    display: flex;
    direction: ltr;
    align-items: center;
    gap: 23px;
    padding-left: 12px;
`

const User = styled.div`
    display: flex;
    align-items: center;
    gap: 7px;
    margin-left: -5px;
    font-size: 8px;
`

const Avatar = styled.span`
    width: 16px;
    line-height: 16px;
    border-radius: 50%;
    background: #d5d5d5;
    color: #777;
    text-align: center;
`

const TabBar = styled.nav`
    display: flex;
    height: 21px;
`

const Tab = styled.button`
    width: ${props => props.$width}px;
    background: ${props => props.$on ? '#f3f3f3' : 'transparent'};
    color: ${props => props.$on ? '#217346' : 'white'};
`

const TellMe = styled(Plain)`
    gap: 8px;
    padding: 0 9px;
`

const Share = styled(Plain)`
    gap: 4px;
    height: 17px;
    margin: 2px auto 0 8px;
    padding: 0 3px;
    border: 1px solid #9cc4ad;
    font-size: 10px;
    font-weight: bold;
`

const RibbonBar = styled.section`
    display: flex;
    height: 65px;
    background: #f3f3f3;
    border-bottom: 1px solid #d2d2d2;
`

const GroupBox = styled.div`
    flex: ${props => props.$size} 1 0;
    min-width: 0;
    display: flex;
    flex-direction: column;
    margin: 3px 0 1px;
    border-left: 1px solid #a8a8a8;
`

const GroupBody = styled.div`
    flex: 1;
    display: flex;
    justify-content: space-around;
    padding: 0 4px;
`

const GroupName = styled.div`
    display: flex;
    justify-content: center;
    align-items: center;
    position: relative;
    height: 10px;
    font-size: 8px;
    line-height: 10px;
`

const LauncherButton = styled(Plain)`
    position: absolute;
    left: 2px;
    bottom: 1px;
`

const Big = styled.button`
    display: flex;
    flex-direction: column;
    align-items: center;
    justify-content: flex-start;
    line-height: 11px;

    span {
        display: flex;
        align-items: center;
        gap: 3px;
    }
`

const BigArt = styled.div`
    height: 26px;
    padding-top: 3px;
`

const Below = styled.span`
    padding-top: 3px;
`

const Stack = styled.div`
    display: flex;
    flex-direction: column;
    gap: 4px;
    width: ${props => props.$wide ? '80px' : 'auto'};
    padding-top: 3px;
`

const Small = styled.button`
    display: flex;
    align-items: center;
    gap: 6px;
    height: 12px;
`

const Push = styled.i`
    width: ${props => props.$gap}px;
`

const Block = styled.div`
    flex: ${props => props.$fit ? `0 1 ${props.$fit}px` : '1'};
    min-width: 0;
    display: flex;
    flex-direction: column;
    gap: 6px;
    padding-top: 5px;
`

const ToolRow = styled.div`
    display: flex;
    align-items: center;
    justify-content: ${props => props.$start ? 'flex-start' : 'space-between'};
    gap: ${props => props.$start ? '1px' : '0'};
    height: 16px;
`

const pressed = css`
    background: #cfcfcf;
    box-shadow: inset 0 0 0 1px #a8a8a8;
`

const Tool = styled(Plain)`
    width: 16px;
    height: 16px;
    font-size: 10px;
    ${props => props.$on && pressed}
`

const WideTool = styled(Plain)`
    gap: 4px;
    height: 16px;
    padding: 0 3px;
    background: ${props => props.$on ? '#d0d0d0' : 'none'};
`

const Italic = styled.i`
    font-family: "Liberation Serif", serif;
    font-weight: bold;
`

const Rule = styled.span`
    width: 1px;
    height: 14px;
    background: #dcdcdc;
`

const PickerBox = styled.span`
    flex: 0 1 ${props => props.$size}px;
    display: flex;
    align-items: center;
    height: 17px;
    padding: 0 2px 0 4px;
    background: white;
    border: 1px solid #b5b5b5;
`

const PickerSelect = styled.select`
    appearance: none;
    flex: 1;
    min-width: 0;
    text-align: ${props => props.$align};
    text-align-last: ${props => props.$align};
    padding-left: 3px;
`

const RibbonEnd = styled.div`
    flex: 54 1 0;
    display: flex;
    align-items: flex-end;
    justify-content: flex-end;
`

const Collapse = styled(Plain)`
    margin: 0 0 3px 5px;
`

const FormulaBar = styled.section`
    display: flex;
    direction: ltr;
    align-items: center;
    height: 30px;
    padding: 0 3px;
`

const Field = styled.div`
    display: flex;
    align-items: center;
    height: 17px;
    padding: 0 4px;
    background: white;
    border: 1px solid #d0d0d0;

    input {
        flex: 1;
        min-width: 0;
    }
`

const NameBox = styled(Field)`
    width: 72px;
`

const FormulaTools = styled(Field)`
    width: 77px;
    justify-content: space-around;
`

const FormulaField = styled(Field)`
    flex: 1;
    margin-left: 2px;
`

const Fx = styled.button`
    font: italic 12px "Liberation Serif", serif;
`

const Dots = styled.span`
    width: 21px;
    text-align: center;
    color: #999;
`

const SheetArea = styled.main`
    flex: 1;
    min-height: 0;
    display: flex;
    overflow: hidden;
`

const Table = styled.table`
    flex: 1;
    align-self: flex-start;
    table-layout: fixed;
    width: 100%;
    border-spacing: 0;
    color: #111;
    font-size: 13px;
    line-height: 18px;
`

const ColHead = styled.th`
    height: 13px;
    padding: 0;
    font-size: 8px;
    font-weight: normal;
    line-height: 11px;
    color: #444;
    background: ${props => props.$on ? '#d2d2d2' : '#e6e6e6'};
    border-left: 1px solid #c8c8c8;
    border-bottom: 1px solid ${props => props.$on ? '#217346' : '#b8b8b8'};
`

const Row = styled.tr`
    height: 21px;

    &:nth-child(3n + 2) {
        height: 22px;
    }
`

const RowHead = styled.th`
    padding: 0;
    vertical-align: bottom;
    font-size: 8px;
    font-weight: normal;
    line-height: 13px;
    color: ${props => props.$on ? '#217346' : '#444'};
    background: ${props => props.$on ? '#d2d2d2' : '#e6e6e6'};
    border-left: 1px solid ${props => props.$on ? '#217346' : '#b8b8b8'};
    border-bottom: 1px solid #c8c8c8;
`

const selected = css`
    border-color: #217346;
    outline: 1px solid #217346;
`

const Cell = styled.td`
    padding: 0;
    text-align: center;
    font-size: ${props => props.$bold ? '11px' : '13px'};
    font-weight: ${props => props.$bold ? 'bold' : 'normal'};
    background: ${props => props.$fill};
    border-left: 1px solid #4a4a4a;
    border-bottom: 1px solid #4a4a4a;
    ${props => props.$active && selected}
`

const TitleCell = styled(Cell)`
    font-size: 12px;
`

const HeadCell = styled(Cell)`
    border-bottom: 0;
`

const Blank = styled.td`
    padding: 0;
    background: white;
    border-bottom: 1px solid #dedede;
`

const VScroll = styled.div`
    display: flex;
    flex-direction: column;
    align-items: center;
    width: 14px;
    padding-top: 2px;
    background: #efefef;

    button:last-child {
        margin-top: auto;
    }
`

const ScrollButton = styled(Plain)`
    width: 11px;
    height: 11px;
    background: white;
    border: 1px solid #bbb;
`

const VThumb = styled.div`
    width: 11px;
    height: 35px;
    background: white;
    border: 1px solid #bbb;
`

const SheetBar = styled.nav`
    display: flex;
    align-items: center;
    height: 18px;
    background: #e6e6e6;
    border-bottom: 1px solid #cfcfcf;
    font-family: "Liberation Sans", "DejaVu Sans Condensed", "DejaVu Sans", sans-serif;
`

const SheetNav = styled.div`
    display: flex;
    gap: 10px;
    width: 63px;
    padding-right: 14px;
`

const SheetTab = styled.button`
    width: ${props => props.$width}px;
    height: ${props => props.$on ? '17px' : '13px'};
    color: ${props => props.$on ? '#217346' : '#555'};
    font-size: ${props => props.$on ? '8px' : '9px'};
    font-weight: ${props => props.$on ? 'bold' : 'normal'};
    background: ${props => props.$on ? 'white' : props.$marked ? '#f3f3df' : 'none'};
    border-right: 1px solid #b0b0b0;
    ${props => props.$on && 'border-bottom: 1px solid #217346;'}
`

const SheetMore = styled.div`
    display: flex;
    align-items: center;
    justify-content: space-between;
    width: 63px;
    padding-right: 12px;
`

const HScroll = styled.div`
    flex: 1;
    display: flex;
    align-items: center;
    margin-left: 16px;
    background: #efefef;

    button:last-child {
        margin-right: auto;
    }
`

const HThumb = styled.div`
    width: 11px;
    height: 11px;
    background: white;
    border: 1px solid #bbb;
`

const StatusBar = styled.footer`
    display: flex;
    align-items: center;
    height: 15px;
    background: #f3f3f3;
    border-bottom: 1px solid #cfcfcf;
    font-size: 8px;
`

const StatusInfo = styled.div`
    display: flex;
    align-items: center;
    gap: 15px;
    padding-right: 9px;
    margin-left: auto;
`

const Access = styled.div`
    display: flex;
    align-items: center;
    gap: 3px;
`

const ViewTools = styled.div`
    display: flex;
`

const ViewButton = styled(Plain)`
    width: 28px;
    height: 14px;
    background: ${props => props.$on ? '#c6c6c6' : 'none'};
`

const Zoom = styled.div`
    display: flex;
    align-items: center;
    gap: 3px;
    padding: 0 1px 0 6px;

    button {
        font-size: 11px;
        width: 9px;
    }
`

const Slider = styled.input`
    appearance: none;
    width: 70px;
    height: 1px;
    background: #888;

    &::-webkit-slider-thumb {
        appearance: none;
        width: 3px;
        height: 8px;
        background: #444;
    }
`

const Percent = styled.span`
    padding-right: 7px;
`

const TaskRow = styled.footer`
    display: grid;
    grid-template-columns: 1fr auto 1fr;
    align-items: center;
    direction: ltr;
    height: 34px;
    background: #eeeeee;
    color: #222;
    font-family: Roboto, "Noto Sans", "DejaVu Sans", sans-serif;
`

const Weather = styled.div`
    display: flex;
    gap: 3px;
    padding-left: 15px;
`

const WeatherArt = styled.div`
    position: relative;
    width: 19px;
    padding-top: 3px;
`

const Badge = styled.span`
    position: absolute;
    top: -1px;
    right: 1px;
    width: 11px;
    border-radius: 50%;
    background: #c42b1c;
    color: white;
    font-size: 8px;
    line-height: 11px;
    text-align: center;
`

const Muted = styled.p`
    color: #777;
`

const Dock = styled.div`
    display: flex;
    align-items: center;
    gap: 5px;
    padding-left: 4px;
`

const SearchBox = styled.label`
    display: flex;
    align-items: center;
    gap: 7px;
    width: 152px;
    height: 22px;
    margin-left: 6px;
    padding: 0 2px 0 8px;
    background: white;
    border-radius: 11px;

    input {
        flex: 1;
        min-width: 0;
    }
`

const DockItem = styled(Plain)`
    position: relative;
    width: 26px;
    height: 26px;
    border-radius: 4px;
    background: ${props => props.$on ? 'white' : 'none'};

    &::after {
        content: '';
        position: absolute;
        bottom: 0;
        width: ${props => props.$on ? '11px' : '4px'};
        height: 2px;
        border-radius: 1px;
        background: ${props => props.$mark || 'none'};
    }
`

const Tray = styled.div`
    display: flex;
    align-items: center;
    justify-content: flex-end;
    gap: 11px;
    padding-right: 13px;
`

const Lang = styled.span`
    padding: 0 9px 0 6px;
`

const Status = styled.div`
    display: flex;
    align-items: center;
    gap: 5px;
`

const Clock = styled.div`
    text-align: right;
`
